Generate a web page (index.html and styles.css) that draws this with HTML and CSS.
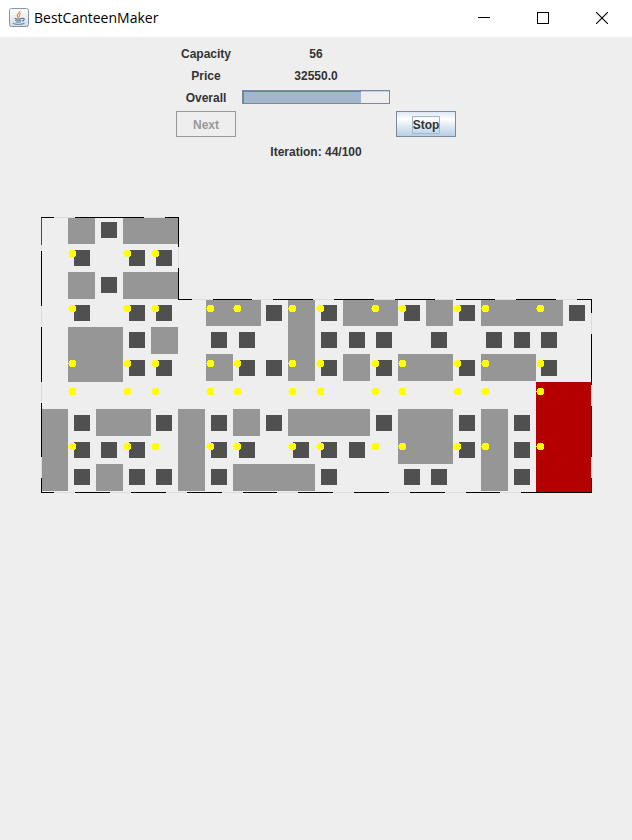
FILE: index.html
```html
<!DOCTYPE html>
<html lang="en">
<head>
<meta charset="utf-8">
<title>BestCanteenMaker</title>
<link rel="stylesheet" href="styles.css">
</head>
<body>
<header class="titlebar">
  <svg class="app-icon" viewBox="0 0 20 20" aria-hidden="true">
    <defs>
      <linearGradient id="tile" x1="0" y1="0" x2="0" y2="1">
        <stop offset="0" stop-color="#ffffff"/>
        <stop offset="1" stop-color="#d3dbe3"/>
      </linearGradient>
    </defs>
    <rect x="0.5" y="0.5" width="19" height="18" rx="2" fill="url(#tile)" stroke="#8496aa"/>
    <path d="M10.8 2.8C11.4 5 7.4 5.8 8.2 7.8C8.5 8.6 9.3 9.2 9.5 10M12 5.2C9.2 6.3 10.8 7.4 10.4 9.2" fill="none" stroke="#ee8c3c" stroke-width="1.2"/>
    <path d="M5.5 10.3C7.5 11 11 11 13 10.2M6 12.2H12.5M6.8 14H12M13 10.5C16.5 9.8 15.5 12.8 13 13.2" fill="none" stroke="#58799b" stroke-width="1.1"/>
    <path d="M4 15C5 16.8 13.8 16.8 15.4 14.8" fill="none" stroke="#6885a3" stroke-width="1.1"/>
  </svg>
  <h1 class="title">BestCanteenMaker</h1>
  <div class="window-buttons">
    <button class="window-button" type="button" aria-label="Minimize">
      <svg viewBox="0 0 12 12"><path d="M0 5H12V6H0Z"/></svg>
    </button>
    <button class="window-button" type="button" aria-label="Maximize">
      <svg viewBox="0 0 12 12"><path d="M0 0H12V12H0ZM1 1V11H11V1Z" fill-rule="evenodd"/></svg>
    </button>
    <button class="window-button" type="button" aria-label="Close">
      <svg viewBox="0 0 12 12"><path d="M0 0L12 12M12 0L0 12" stroke="#000" stroke-width="1.1"/></svg>
    </button>
  </div>
</header>
<main>
  <section class="controls">
    <span class="label">Capacity</span>
    <output class="value">56</output>
    <span class="label">Price</span>
    <output class="value">32550.0</output>
    <label class="label" for="overall">Overall</label>
    <progress class="overall" id="overall" value="81" max="100"></progress>
    <button class="button next" type="button" disabled>Next</button>
    <button class="button stop" type="button"><span class="focus">Stop</span></button>
    <p class="iteration">Iteration: 44/100</p>
  </section>
  <svg class="plan" viewBox="41 217 551 276" role="img" aria-label="Canteen floor plan">
    <defs>
      <path id="dot" d="M2 0h5v1h1v5h-1v1h-5v-1h-1v-2h-1v-1h1v-2h1z"/>
      <g id="dots">
        <use href="#dot" x="68"/><use href="#dot" x="123"/><use href="#dot" x="151"/>
        <use href="#dot" x="206"/><use href="#dot" x="233"/><use href="#dot" x="288"/>
        <use href="#dot" x="316"/><use href="#dot" x="371"/><use href="#dot" x="398"/>
        <use href="#dot" x="453"/><use href="#dot" x="481"/><use href="#dot" x="536"/>
      </g>
    </defs>

    <!-- windows: light outline below the solid wall pieces -->
    <path class="window" d="M41 217H179V299H592V493H41ZM42 218V492H591V300H178V218Z"/>
    <path class="wall" d="M41 217h13v1h-13zM75 217h69v1h-69zM165 217h14v1h-14z
      M178 217h1v30h-1zM178 268h1v32h-1z
      M178 299h14v1h-14zM213 299h39v1h-39zM273 299h40v1h-40zM334 299h40v1h-40zM395 299h40v1h-40zM456 299h39v1h-39zM516 299h40v1h-40zM577 299h15v1h-15z
      M591 299h1v14h-1zM591 334h1v51h-1zM591 406h1v51h-1zM591 478h1v15h-1z
      M41 492h13v1h-13zM75 492h35v1h-35zM131 492h35v1h-35zM187 492h35v1h-35zM243 492h34v1h-34zM298 492h35v1h-35zM354 492h35v1h-35zM410 492h35v1h-35zM466 492h34v1h-34zM521 492h71v1h-71z
      M41 251h1v55h-1zM41 327h1v55h-1zM41 403h1v54h-1zM41 478h1v15h-1z"/>
    <path class="door" d="M41 218h1v27h-1z"/>

    <path class="table" d="M68 218h27v26h-27zM123 218h55v26h-55zM68 272h27v27h-27zM123 272h55v27h-55z
      M68 327h55v55h-55zM151 327h27v27h-27z
      M42 409h26v82h-26zM96 409h55v27h-55zM96 464h27v27h-27zM178 409h27v82h-27z
      M206 300h55v26h-55zM288 300h27v81h-27zM206 354h27v27h-27z
      M343 300h55v26h-55zM426 300h27v26h-27zM343 354h27v27h-27zM398 354h55v27h-55z
      M481 300h82v26h-82zM481 354h55v27h-55z
      M233 409h27v27h-27zM288 409h82v27h-82zM233 464h82v27h-82z
      M398 409h55v55h-55zM481 409h27v82h-27z"/>
    <path class="kitchen" d="M536 382h55v110h-55z"/>
    <path class="chair" d="M101 222h16v16h-16z
      M74 250h16v16h-16zM129 250h16v16h-16zM156 250h16v16h-16z
      M101 277h16v16h-16z
      M74 305h16v16h-16zM129 305h16v16h-16zM156 305h16v16h-16zM266 305h16v16h-16zM321 305h16v16h-16zM404 305h16v16h-16zM459 305h16v16h-16zM569 305h16v16h-16z
      M129 332h16v16h-16zM211 332h16v16h-16zM239 332h16v16h-16zM321 332h16v16h-16zM349 332h16v16h-16zM376 332h16v16h-16zM431 332h16v16h-16zM486 332h16v16h-16zM514 332h16v16h-16zM541 332h16v16h-16z
      M129 360h16v16h-16zM156 360h16v16h-16zM239 360h16v16h-16zM266 360h16v16h-16zM321 360h16v16h-16zM376 360h16v16h-16zM459 360h16v16h-16zM541 360h16v16h-16z
      M74 415h16v16h-16zM156 415h16v16h-16zM211 415h16v16h-16zM266 415h16v16h-16zM376 415h16v16h-16zM459 415h16v16h-16zM514 415h16v16h-16z
      M74 442h16v16h-16zM101 442h16v16h-16zM129 442h16v16h-16zM211 442h16v16h-16zM239 442h16v16h-16zM293 442h16v16h-16zM321 442h16v16h-16zM349 442h16v16h-16zM459 442h16v16h-16zM514 442h16v16h-16z
      M74 469h16v16h-16zM129 469h16v16h-16zM156 469h16v16h-16zM211 469h16v16h-16zM321 469h16v16h-16zM404 469h16v16h-16zM431 469h16v16h-16zM514 469h16v16h-16z"/>

    <g class="lamp">
      <use href="#dot" x="68" y="250"/><use href="#dot" x="123" y="250"/><use href="#dot" x="151" y="250"/>
      <use href="#dots" y="305"/>
      <use href="#dots" y="360"/>
      <use href="#dots" y="388"/>
      <use href="#dots" y="443"/>
    </g>
  </svg>
</main>
</body>
</html>
```
FILE: styles.css
```css
* {
  box-sizing: border-box;
}

body {
  margin: 0;
  min-height: 100vh;
  background: #eeeeee;
  color: #333333;
  font: bold 12px/16px "Liberation Sans", Arial, sans-serif;
}

.titlebar {
  display: flex;
  align-items: flex-start;
  height: 37px;
  padding: 0 1px 0 9px;
  background: #ffffff;
}

.app-icon {
  width: 20px;
  height: 20px;
  margin-top: 8px;
}

.title {
  flex: 1;
  margin: 0 0 0 5px;
  color: #000000;
  font: 14px/36px "Open Sans", "Noto Sans", sans-serif;
}

.window-buttons {
  display: flex;
  gap: 1px;
}

.window-button {
  display: grid;
  place-items: center;
  width: 58px;
  height: 36px;
  padding: 0;
  border: 0;
  background: transparent;
}

.window-button svg {
  width: 12px;
  height: 12px;
}

.controls {
  display: grid;
  grid-template-columns: 60px 148px 60px;
  grid-template-rows: 16px 16px 15px 26px 18px;
  gap: 6px;
  justify-content: center;
  padding-top: 9px;
  text-align: center;
}

.label {
  grid-column: 1;
}

.value {
  grid-column: 2;
}

.overall {
  appearance: none;
  width: 100%;
  height: 14px;
  border: 1px solid #7a8a99;
  background: #eeeeee;
}

.overall::-webkit-progress-bar {
  background: linear-gradient(#b8cfe5 1px, #eeeeee 1px);
}

.overall::-webkit-progress-value {
  border-top: 1px solid #6382bf;
  border-left: 1px solid #6382bf;
  background: #a3b8cc;
}

.button {
  display: grid;
  place-items: center;
  padding: 1px 0 0;
  border: 1px solid #7a8a99;
  color: #333333;
  font: inherit;
}

.next {
  grid-column: 1;
  border-color: #999999;
  background: #eeeeee;
  color: #999999;
}

.stop {
  grid-column: 3;
  background: linear-gradient(#dde8f3, #ffffff 30%, #dde8f3 60%, #b8cfe5);
}

.focus {
  border: 1px solid #a3b8cc;
}

.iteration {
  grid-column: 1 / -1;
  margin: 0;
  line-height: 18px;
}

.plan {
  display: block;
  width: calc(100% - 81px);
  margin: 56px 40px 0 41px;
  shape-rendering: crispEdges;
}

.window {
  fill: #dcdcdc;
  fill-rule: evenodd;
}

.wall {
  fill: #000000;
}

.door {
  fill: #ff0000;
}

.table {
  fill: #969696;
}

.kitchen {
  fill: #b40000;
}

.chair {
  fill: #505050;
}

.lamp {
  fill: #ffff00;
}
```
